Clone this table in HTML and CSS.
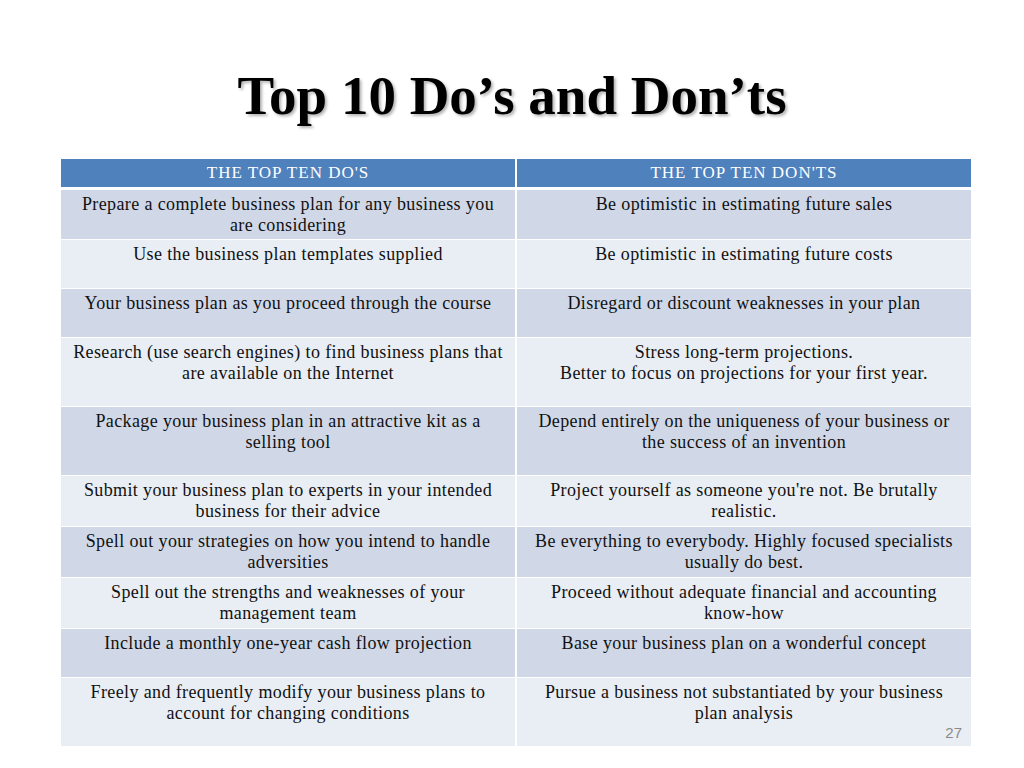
FILE: index.html
```html
<!DOCTYPE html>
<html>
<head>
<meta charset="utf-8">
<link rel="stylesheet" href="styles.css">
</head>
<body>
<div class="slide">
  <h1 class="title">Top 10 Do’s and Don’ts</h1>
  <div class="table">
    <div class="hd">THE TOP TEN DO'S</div>
    <div class="hd">THE TOP TEN DON'TS</div>

    <div class="c odd">Prepare a complete business plan for any business you are considering</div>
    <div class="c odd">Be optimistic in estimating future sales</div>

    <div class="c even">Use the business plan templates supplied</div>
    <div class="c even">Be optimistic in estimating future costs</div>

    <div class="c odd">Your business plan as you proceed through the course</div>
    <div class="c odd">Disregard or discount weaknesses in your plan</div>

    <div class="c even">Research (use search engines) to find business plans that are available on the Internet</div>
    <div class="c even">Stress long-term projections.<br>Better to focus on projections for your first year.</div>

    <div class="c odd">Package your business plan in an attractive kit as a selling tool</div>
    <div class="c odd">Depend entirely on the uniqueness of your business or the success of an invention</div>

    <div class="c even">Submit your business plan to experts in your intended business for their advice</div>
    <div class="c even">Project yourself as someone you're not. Be brutally realistic.</div>

    <div class="c odd">Spell out your strategies on how you intend to handle adversities</div>
    <div class="c odd">Be everything to everybody. Highly focused specialists usually do best.</div>

    <div class="c even">Spell out the strengths and weaknesses of your management team</div>
    <div class="c even">Proceed without adequate financial and accounting know-how</div>

    <div class="c odd">Include a monthly one-year cash flow projection</div>
    <div class="c odd">Base your business plan on a wonderful concept</div>

    <div class="c even">Freely and frequently modify your business plans to account for changing conditions</div>
    <div class="c even last">Pursue a business not substantiated by your business plan analysis<span class="pgnum">27</span></div>
  </div>
</div>
</body>
</html>
```

FILE: styles.css
```css
html, body {
  margin: 0;
  padding: 0;
  background: #ffffff;
}

.slide {
  width: 1024px;
  height: 768px;
  position: relative;
  overflow: hidden;
  font-family: "Liberation Serif", "Times New Roman", serif;
  color: #111111;
}

.title {
  margin: 0;
  padding-top: 66px;
  height: 92px;
  box-sizing: border-box;
  text-align: center;
  font-family: "Liberation Serif", "Times New Roman", serif;
  font-weight: bold;
  font-size: 55px;
  line-height: 60px;
  color: #000000;
  text-shadow: 2px 2px 3px rgba(0, 0, 0, 0.3);
  letter-spacing: 0;
}

.table {
  margin: 0 0 0 61px;
  width: 910px;
  display: grid;
  grid-template-columns: 454px 454px;
  grid-template-rows: 30px 49px 48px 48px 68px 68px 50px 50px 50px 48px 68px;
  column-gap: 2px;
  row-gap: 1px;
  position: relative;
  top: 67px;
}

.hd {
  background: #4f81bd;
  color: #ffffff;
  font-size: 17px;
  letter-spacing: 1px;
  line-height: 28px;
  text-align: center;
  margin-bottom: 2px;
}

.c {
  box-sizing: border-box;
  padding: 4px 10px 0 10px;
  font-size: 18px;
  letter-spacing: 0.38px;
  line-height: 21px;
  text-align: center;
}

.odd {
  background: #d0d8e8;
}

.even {
  background: #e9edf4;
}

.last {
  position: relative;
}

.pgnum {
  position: absolute;
  right: 9px;
  bottom: 5px;
  font-family: "Liberation Sans", Arial, sans-serif;
  font-size: 15px;
  letter-spacing: 0;
  line-height: 16px;
  color: #8a8a8a;
}
```
